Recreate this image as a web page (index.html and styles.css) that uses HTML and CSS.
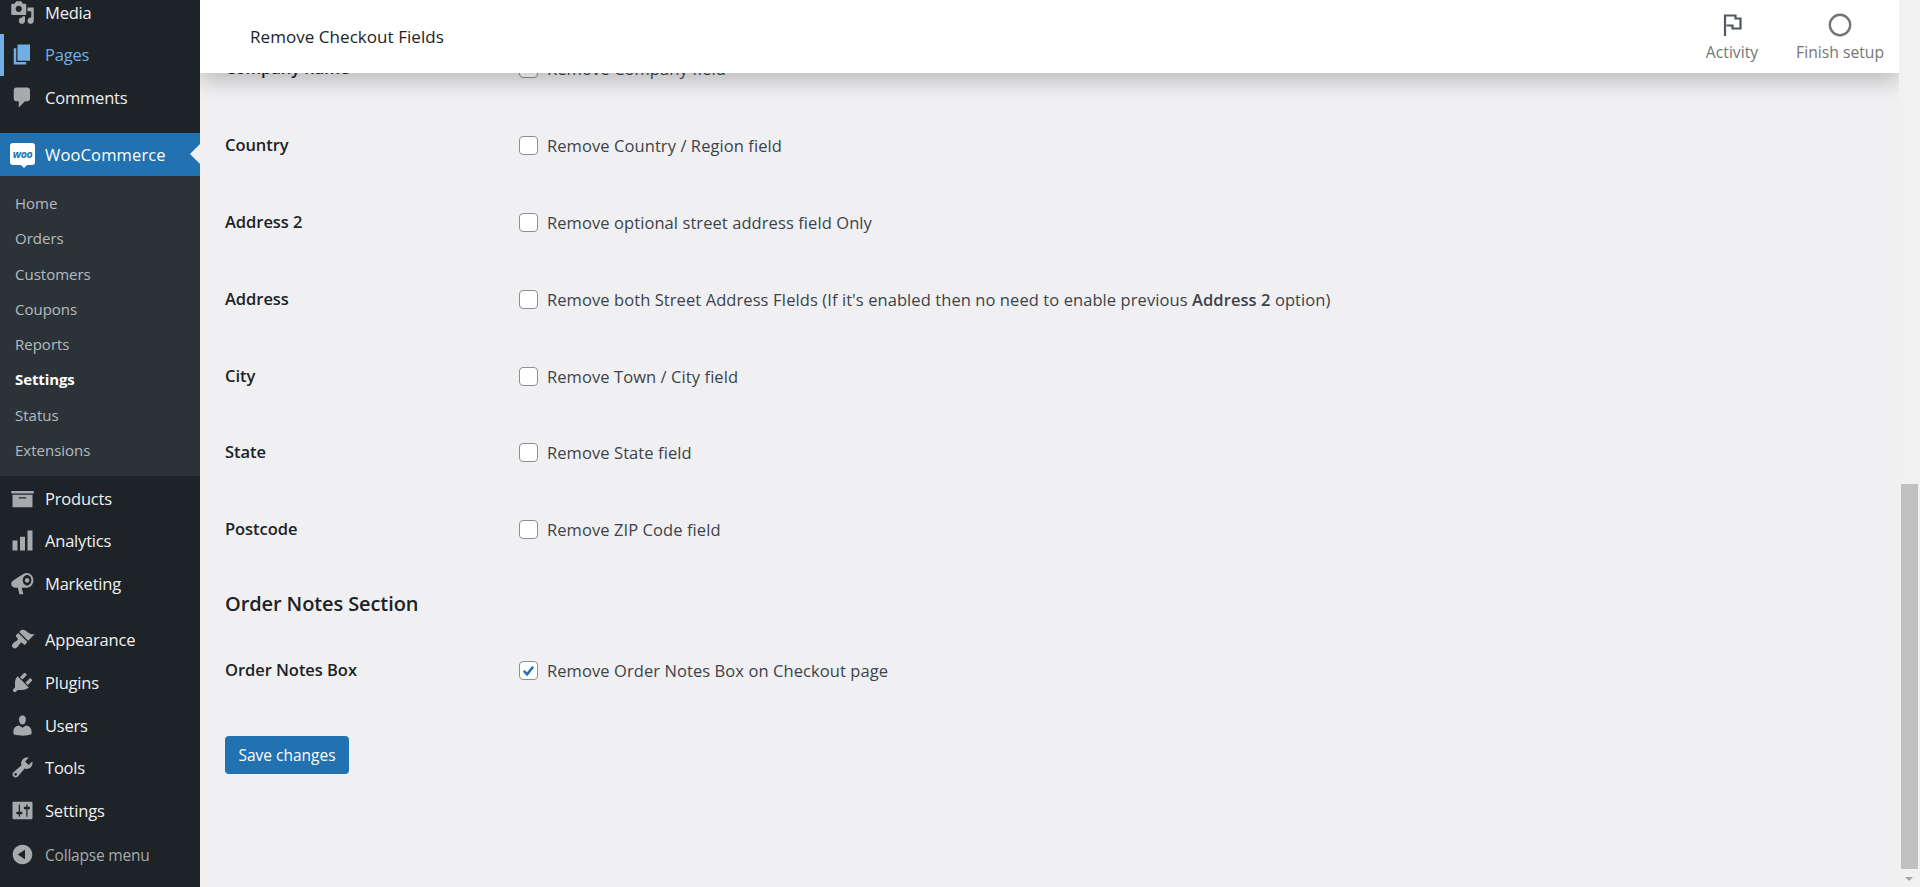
FILE: index.html
```html
<!DOCTYPE html>
<html lang="en">
<head>
<meta charset="utf-8">
<title>Remove Checkout Fields</title>
<link rel="stylesheet" href="styles.css">
</head>
<body>
<aside class="sidebar">
  <nav class="menu menu-first">
    <a class="item"><svg class="ico" viewBox="0 0 20 20"><path d="M13 11V4c0-.55-.45-1-1-1h-1.67L9 1H5L3.67 3H2c-.55 0-1 .45-1 1v7c0 .55.45 1 1 1h10c.55 0 1-.45 1-1zM7 4.5c1.38 0 2.5 1.12 2.5 2.5S8.38 9.5 7 9.5 4.5 8.38 4.5 7 5.62 4.5 7 4.5zM14 6h5v10.5c0 1.38-1.12 2.5-2.5 2.5S14 17.88 14 16.5s1.12-2.5 2.5-2.5c.17 0 .34.02.5.05V9h-3V6zm-4 8.05V13h2v3.5c0 1.38-1.12 2.5-2.5 2.5S7 17.88 7 16.5 8.12 14 9.5 14c.17 0 .34.02.5.05z"/></svg><span>Media</span></a>
    <a class="item item-hover"><svg class="ico" viewBox="0 0 20 20"><path d="M6 15V2h10v13H6zm-1 1h8v2H3V5h2v11z"/></svg><span>Pages</span></a>
    <a class="item"><svg class="ico" viewBox="0 0 20 20"><path d="M5 2h9c1.1 0 2 .9 2 2v7c0 1.1-.9 2-2 2h-2l-5 5v-5H5c-1.1 0-2-.9-2-2V4c0-1.1.9-2 2-2z"/></svg><span>Comments</span></a>
  </nav>
  <a class="item item-current">
    <span class="woo"><span class="woo-text">woo</span></span><span>WooCommerce</span>
  </a>
  <nav class="submenu">
    <a class="sub">Home</a>
    <a class="sub">Orders</a>
    <a class="sub">Customers</a>
    <a class="sub">Coupons</a>
    <a class="sub">Reports</a>
    <a class="sub sub-current">Settings</a>
    <a class="sub">Status</a>
    <a class="sub">Extensions</a>
  </nav>
  <nav class="menu menu-products">
    <a class="item"><svg class="ico" viewBox="0 0 20 20"><path d="M19 4v2H1V4h18zM2 7h16v10H2V7zm11 3V9H7v1h6z"/></svg><span>Products</span></a>
    <a class="item"><svg class="ico" viewBox="0 0 20 20"><path d="M18 18V2h-4v16h4zm-6 0V7H8v11h4zm-6 0v-8H2v8h4z"/></svg><span>Analytics</span></a>
    <a class="item"><svg class="ico" viewBox="0 0 20 20"><path fill-rule="evenodd" d="M13.5 1.5c2.9 0 5.2 2.6 5.2 5.9s-2.300 5.900-5.200 5.900H9.300l1.400 5.200H7.500L6.300 13.300H4.600C2.700 13.300 1 12 1 10.100 1 8.600 2 7.700 3.200 7.100l6.800-4.300c1-.8 2.200-1.300 3.500-1.300zm.2 1.700c-1.900 0-3.500 1.900-3.500 4.200s1.600 4.200 3.500 4.200 3.400-1.900 3.400-4.200-1.500-4.200-3.400-4.200zm0 2.300c1 0 1.800.9 1.800 1.900s-.8 1.900-1.800 1.900-1.800-.9-1.800-1.900.8-1.900 1.800-1.900z"/></svg><span>Marketing</span></a>
  </nav>
  <nav class="menu menu-tools">
    <a class="item"><svg class="ico" viewBox="0 0 20 20"><path d="M14.48 11.06L7.410 3.990l1.500-1.500c.5-.56 2.300-.47 3.510.32 1.210.8 1.430 1.280 2.910 2.100 1.180.64 2.450 1.260 4.450.85zm-.71.71L6.700 4.700 4.930 6.470c-.39.39-.39 1.020 0 1.410l1.060 1.060c.39.39.39 1.030 0 1.420-.6.6-1.430 1.110-2.210 1.690-.35.26-.7.53-1.010.84-1.120 1.120-1.590 2.530-.83 3.290l.71.71c.76.76 2.170.29 3.290-.83.31-.31.58-.66.84-1.010.58-.78 1.090-1.610 1.690-2.210.39-.39 1.030-.39 1.420 0l1.060 1.060c.39.39 1.020.39 1.410 0z"/></svg><span>Appearance</span></a>
    <a class="item"><svg class="ico" viewBox="0 0 20 20"><path d="M13.110 4.360L9.870 7.600 8 5.730l3.240-3.240c.35-.34 1.050-.2 1.560.32.52.51.66 1.210.31 1.550zm-8 1.770l.91-1.120 9.010 9.010-1.190.84c-.71.71-2.630 1.160-3.820 1.160H6.140L4.900 17.260c-.59.59-1.540.59-2.120 0-.59-.58-.59-1.530 0-2.120l1.240-1.240v-3.880c0-1.130.4-3.190 1.090-3.890zm7.260 3.970l3.240-3.240c.34-.35 1.040-.21 1.550.31.52.51.66 1.210.31 1.550l-3.240 3.250z"/></svg><span>Plugins</span></a>
    <a class="item"><svg class="ico" viewBox="0 0 20 20"><path d="M10 9.250c-2.270 0-2.730-3.440-2.730-3.440C7 4.020 7.820 2 9.970 2c2.160 0 2.980 2.020 2.710 3.810 0 0-.41 3.440-2.680 3.440zm0 2.570L12.720 10c2.390 0 4.520 2.330 4.520 4.530v2.490s-3.650 1.130-7.240 1.130c-3.650 0-7.240-1.130-7.240-1.130v-2.490c0-2.250 1.940-4.480 4.470-4.480z"/></svg><span>Users</span></a>
    <a class="item"><svg class="ico" viewBox="0 0 20 20"><path d="M16.680 9.770c-1.340 1.340-3.300 1.670-4.950.99l-5.410 6.520c-.99.99-2.590.99-3.580 0s-.99-2.590 0-3.570l6.520-5.420c-.68-1.650-.35-3.610.99-4.950 1.280-1.280 3.120-1.620 4.720-1.060l-2.890 2.890 2.820 2.820 2.860-2.870c.53 1.580.18 3.390-1.080 4.650zM3.810 16.210c.4.39 1.040.39 1.430 0 .4-.4.4-1.040 0-1.430-.39-.4-1.030-.4-1.430 0-.39.39-.39 1.030 0 1.430z"/></svg><span>Tools</span></a>
    <a class="item"><svg class="ico" viewBox="0 0 20 20"><path d="M18 16V4c0-.55-.45-1-1-1H3c-.55 0-1 .45-1 1v12c0 .55.45 1 1 1h14c.55 0 1-.45 1-1zM8 11h1c.55 0 1 .45 1 1s-.45 1-1 1H8v1.500c0 .28-.22.5-.5.5s-.5-.22-.5-.5V13H6c-.55 0-1-.45-1-1s.45-1 1-1h1V5.500c0-.28.22-.5.5-.5s.5.22.5.5V11zm5-2h-1c-.55 0-1-.45-1-1s.45-1 1-1h1V5.500c0-.28.22-.5.5-.5s.5.22.5.5V7h1c.55 0 1 .45 1 1s-.45 1-1 1h-1v5.500c0 .28-.22.5-.5.5s-.5-.22-.5-.5V9z"/></svg><span>Settings</span></a>
    <a class="item item-collapse"><svg class="ico" viewBox="0 0 20 20"><path d="M10 2.160c4.330 0 7.840 3.510 7.840 7.840s-3.510 7.840-7.840 7.840S2.160 14.330 2.160 10 5.710 2.160 10 2.160zm2 11.720V6.120L6.180 9.970z"/></svg><span>Collapse menu</span></a>
  </nav>
</aside>

<main class="main">
  <header class="topbar">
    <h1 class="title">Remove Checkout Fields</h1>
    <div class="actions">
      <a class="action action-activity">
        <svg class="action-ico" viewBox="0 0 24 24"><path d="M5 23V2.500h10.500V5.500h5v10h-8v-3h-6" fill="none" stroke="#50575e" stroke-width="2.200"/></svg>
        <span>Activity</span>
      </a>
      <a class="action action-setup">
        <svg class="action-ico" viewBox="0 0 24 24"><circle cx="12" cy="12" r="10.200" fill="none" stroke="#757575" stroke-width="2.400"/></svg>
        <span>Finish setup</span>
      </a>
    </div>
  </header>

  <form class="content">
    <div class="row"><div class="label">Company name</div><label class="field"><span class="box"></span><span>Remove Company field</span></label></div>
    <div class="row"><div class="label">Country</div><label class="field"><span class="box"></span><span>Remove Country / Region field</span></label></div>
    <div class="row"><div class="label">Address 2</div><label class="field"><span class="box"></span><span>Remove optional street address field Only</span></label></div>
    <div class="row"><div class="label">Address</div><label class="field"><span class="box"></span><span>Remove both Street Address FIelds (If it's enabled then no need to enable previous <b>Address 2</b> option)</span></label></div>
    <div class="row"><div class="label">City</div><label class="field"><span class="box"></span><span>Remove Town / City field</span></label></div>
    <div class="row"><div class="label">State</div><label class="field"><span class="box"></span><span>Remove State field</span></label></div>
    <div class="row"><div class="label">Postcode</div><label class="field"><span class="box"></span><span>Remove ZIP Code field</span></label></div>
    <h2 class="section">Order Notes Section</h2>
    <div class="row"><div class="label">Order Notes Box</div><label class="field"><span class="box box-checked"><svg viewBox="0 0 20 20"><path d="M4.500 10.500l3.800 4 7.200-9" fill="none" stroke="#2271b1" stroke-width="3"/></svg></span><span>Remove Order Notes Box on Checkout page</span></label></div>
    <button class="save" type="button">Save changes</button>
  </form>
</main>

<div class="rail">
  <div class="rail-space"></div>
  <div class="thumb"></div>
  <div class="arrow"></div>
</div>
</body>
</html>
```

FILE: styles.css
```css
* { box-sizing: border-box; }
html, body { height: 100%; }
body {
  margin: 0;
  display: flex;
  height: 887px;
  overflow: hidden;
  background: #f0f0f2;
  font-family: "Open Sans", "Noto Sans", sans-serif;
  color: #1d2327;
}

/* Sidebar */
.sidebar {
  flex: 0 0 200px;
  width: 200px;
  height: 887px;
  background: #1d2327;
  overflow: hidden;
  display: flex;
  flex-direction: column;
}
.menu { display: flex; flex-direction: column; }
.menu-first { margin-top: -9px; margin-bottom: 14px; }
.menu-products { margin-top: 1px; }
.menu-tools { margin-top: 14px; }
.item {
  height: 42.600px;
  display: flex;
  align-items: center;
  gap: 10px;
  padding-left: 10px;
  font-size: 16.500px;
  letter-spacing: -.2px;
  color: #f0f0f1;
  position: relative;
  flex: none;
}
.ico { width: 25px; height: 25px; fill: #a7aaad; flex: none; }
.item-hover { color: #72aee6; }
.item-hover .ico { fill: #72aee6; }
.item-hover::before {
  content: "";
  position: absolute;
  left: 0;
  top: 0;
  bottom: 0;
  width: 4px;
  background: #72aee6;
}
.item-current { background: #2271b1; color: #fff; height: 43px; letter-spacing: .15px; }
.item-current::after {
  content: "";
  position: absolute;
  right: 0;
  top: 50%;
  margin-top: -10px;
  border: 10px solid transparent;
  border-left-width: 0;
  border-right-color: #f0f0f2;
}
.woo {
  width: 25px;
  height: 22px;
  background: #fff;
  border-radius: 3px;
  display: flex;
  align-items: center;
  justify-content: center;
  flex: none;
  position: relative;
}
.woo::after {
  content: "";
  position: absolute;
  left: 11px;
  bottom: -3px;
  border: 3px solid transparent;
  border-bottom-width: 0;
  border-top-color: #fff;
}
.woo-text {
  font-size: 10.500px;
  font-weight: 700;
  font-style: italic;
  color: #2271b1;
  letter-spacing: -.3px;
}
.submenu {
  background: #2c3338;
  height: 300px;
  padding-top: 9.500px;
  display: flex;
  flex-direction: column;
  flex: none;
}
.sub {
  height: 35.300px;
  display: flex;
  align-items: center;
  padding-left: 15px;
  font-size: 15px;
  color: rgba(240, 246, 252, .7);
  flex: none;
}
.sub-current { color: #fff; font-weight: 700; letter-spacing: -.1px; }
.item-collapse { color: #a7aaad; font-size: 15.500px; margin-top: 2px; }

/* Main */
.main {
  flex: 1;
  min-width: 0;
  height: 887px;
  position: relative;
  overflow: hidden;
}
.topbar {
  position: absolute;
  left: 0;
  right: 0;
  top: 0;
  height: 73px;
  background: #fff;
  display: flex;
  align-items: center;
  justify-content: space-between;
  padding-left: 50px;
  box-shadow: 0 8px 20px rgba(0, 0, 0, .22);
}
.title {
  margin: 0;
  font-size: 17px;
  font-weight: 500;
  color: #1d2327;
  letter-spacing: .05px;
}
.actions { display: flex; align-items: flex-start; height: 73px; }
.action {
  display: flex;
  flex-direction: column;
  align-items: center;
  font-size: 15.700px;
  color: #757575;
  padding-top: 13px;
  gap: 4px;
}
.action-activity { margin-right: 38px; }
.action-setup { margin-right: 15px; }
.action-ico { width: 24px; height: 24px; display: block; }

/* Content */
.content {
  padding: 30px 0 0 25px;
  display: flex;
  flex-direction: column;
  align-items: flex-start;
}
.row {
  display: flex;
  align-items: center;
  height: 76.900px;
  width: 100%;
  flex: none;
}
.label {
  flex: 0 0 294px;
  font-size: 16.500px;
  font-weight: 600;
  color: #1d2327;
  letter-spacing: -.05px;
  padding-bottom: 2px;
}
.field {
  display: flex;
  align-items: center;
  gap: 9px;
  font-size: 16.500px;
  color: #3c434a;
  letter-spacing: .08px;
}
.field b { font-weight: 600; }
.box {
  width: 19px;
  height: 19px;
  flex: none;
  background: #fff;
  border: 1px solid #8c8f94;
  border-radius: 4px;
  display: block;
}
.box svg { width: 17px; height: 17px; display: block; }
.section {
  margin: 22px 0 14px;
  font-size: 20px;
  font-weight: 600;
  line-height: 28px;
  color: #1d2327;
  letter-spacing: -.1px;
}
.save {
  margin-top: 27px;
  width: 124px;
  height: 38px;
  padding: 0 0 0 0;
  border: 0;
  border-radius: 4px;
  background: #2271b1;
  color: #fff;
  font-family: inherit;
  font-size: 15.500px;
}

/* Scrollbar */
.rail {
  flex: 0 0 21px;
  height: 887px;
  background: #f1f1f1;
  display: flex;
  flex-direction: column;
  align-items: flex-start;
  padding-left: 2px;
}
.rail-space { height: 484px; flex: none; }
.thumb { width: 17px; height: 385px; background: #c1c1c1; flex: none; }
.arrow {
  margin: 8px 0 0 4px;
  width: 0;
  height: 0;
  border: 4.500px solid transparent;
  border-bottom-width: 0;
  border-top-color: #a3a3a3;
}
```
